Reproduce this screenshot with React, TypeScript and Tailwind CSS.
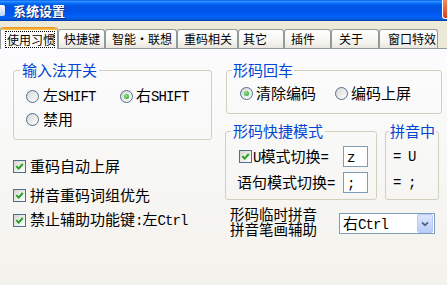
import type { ReactNode } from "react";

const tabs = [
  { name: "快捷键", w: "w-[47px]", pl: "pl-[5px]" },
  { name: "智能•联想", w: "w-[72px]", pl: "pl-[6px]" },
  { name: "重码相关", w: "w-[61px]", pl: "pl-[6px]" },
  { name: "其它", w: "w-[46px]", pl: "pl-[4px]" },
  { name: "插件", w: "w-[47px]", pl: "pl-[6px]" },
  { name: "关于", w: "w-[48px]", pl: "pl-[7px]" },
  { name: "窗口特效", w: "w-[59px]", pl: "pl-[8px]" },
];

function Lat({ children }: { children: ReactNode }) {
  return (
    <span className="font-['Liberation_Mono',monospace] text-[14px] tracking-[-0.9px]">
      {children}
    </span>
  );
}

function Radio({ checked }: { checked?: boolean }) {
  return (
    <span className="flex h-[13px] w-[13px] shrink-0 items-center justify-center rounded-full border border-[#4e6e8e] bg-[linear-gradient(135deg,#d6d6d0,#ffffff)]">
      {checked && (
        <span className="h-[5px] w-[5px] rounded-full bg-[radial-gradient(circle_at_40%_40%,#8ee68e,#1e9a1e)]" />
      )}
    </span>
  );
}

function Check() {
  return (
    <span className="flex h-[13px] w-[13px] shrink-0 items-center justify-center border border-[#4e6e8e] bg-[linear-gradient(135deg,#d6d6d0,#ffffff)]">
      <svg width="9" height="9" viewBox="0 0 9 9">
        <path d="M1.3 4.2 L3.6 6.6 L7.8 2" stroke="#21a121" strokeWidth="1.9" fill="none" />
      </svg>
    </span>
  );
}

function Legend({ children, cls }: { children: ReactNode; cls: string }) {
  return (
    <legend className={`${cls} whitespace-nowrap text-[15px] leading-[16px] text-[#0046d5]`}>
      {children}
    </legend>
  );
}

export default function App() {
  return (
    <div className="h-[285px] w-[447px] overflow-hidden bg-[#ece9d8] font-['Noto_Sans_CJK_SC',sans-serif] text-black">
      {/* title bar */}
      <div className="flex h-[21px] items-center bg-[linear-gradient(180deg,#0058ee_0%,#3593ff_6%,#127dff_12%,#0262ee_20%,#0054e3_30%,#0055eb_60%,#005bf5_72%,#0262f0_86%,#0050d2_94%,#003da8_100%)]">
        <div className="h-[11px] w-[5px] rounded-r-[2px] bg-[linear-gradient(180deg,#ffffff,#b9cff5)]" />
        <span className="ml-[8px] text-[13px] font-bold leading-[21px] text-white [text-shadow:1px_1px_0_#0a2a7a]">
          系统设置
        </span>
        <div className="ml-auto h-[19px] w-[5px] self-start rounded-bl-[3px] border-b border-l border-white bg-[linear-gradient(180deg,#f08a5d,#d6421c)]" />
      </div>

      {/* tabs */}
      <div className="flex h-[27px] items-end">
        <div className="relative z-10 -mb-px h-[22px] w-[58px] rounded-t-[3px] border-x border-[#919b9c] bg-[#fcfcfe]">
          <div className="h-[3px] rounded-t-[3px] bg-[linear-gradient(180deg,#e68b2c,#ffc83c)]" />
          <div className="ml-[4px] mt-[1px] w-[50px] whitespace-nowrap border border-dotted border-black pl-[1px] text-[12px] leading-[15px]">
            使用习惯
          </div>
        </div>
        {tabs.map((t) => (
          <div
            key={t.name}
            className={`${t.w} ${t.pl} h-[19px] whitespace-nowrap rounded-t-[3px] border-x border-t border-[#919b9c] bg-[linear-gradient(180deg,#ffffff,#f4f3ee_70%,#e8e6dd)] text-[12px] leading-[18px]`}
          >
            {t.name}
          </div>
        ))}
      </div>

      {/* panel */}
      <div className="flex h-[237px] border-t border-[#919b9c] bg-[linear-gradient(180deg,#fcfcfe,#f3f2ec)] text-[15px] leading-[18px]">
        {/* left column */}
        <div className="ml-[13px] w-[199px] pt-[13px]">
          <fieldset className="rounded-[3px] border border-[#d0d0bf] pb-[11px] pt-[9px]">
            <Legend cls="ml-[6px] px-[2px]">输入法开关</Legend>
            <div className="pl-[12px]">
              <div className="flex h-[18px] items-center">
                <div className="flex w-[94px] items-center gap-[4px]">
                  <Radio />
                  <span>
                    左<Lat>SHIFT</Lat>
                  </span>
                </div>
                <div className="flex items-center gap-[3px]">
                  <Radio checked />
                  <span>
                    右<Lat>SHIFT</Lat>
                  </span>
                </div>
              </div>
              <div className="mt-[5px] flex h-[18px] items-center gap-[4px]">
                <Radio />
                <span>禁用</span>
              </div>
            </div>
          </fieldset>

          <div className="mt-[17px] flex h-[18px] items-center gap-[4px]">
            <Check />
            <span>重码自动上屏</span>
          </div>
          <div className="mt-[11px] flex h-[18px] items-center gap-[4px]">
            <Check />
            <span>拼音重码词组优先</span>
          </div>
          <div className="mt-[7px] flex h-[18px] items-center gap-[4px]">
            <Check />
            <span>
              禁止辅助功能键<Lat>:</Lat>左<Lat>Ctrl</Lat>
            </span>
          </div>
        </div>

        {/* right column */}
        <div className="ml-[13px] w-[222px] pt-[13px]">
          <fieldset className="ml-[1px] w-[216px] rounded-[3px] border border-[#d0d0bf] pb-[11px] pt-[6px]">
            <Legend cls="ml-[5px] px-[1px]">形码回车</Legend>
            <div className="flex h-[18px] items-center pl-[13px]">
              <div className="flex w-[95px] items-center gap-[3px]">
                <Radio checked />
                <span>清除编码</span>
              </div>
              <div className="flex items-center gap-[3px]">
                <Radio />
                <span>编码上屏</span>
              </div>
            </div>
          </fieldset>

          <div className="mt-[9px] flex">
            <fieldset className="w-[152px] rounded-[3px] border border-[#d0d0bf] pb-[6px] pt-[7px]">
              <Legend cls="ml-[5px] px-[2px]">形码快捷模式</Legend>
              <div className="pr-[8px]">
                <div className="flex h-[21px] items-center pl-[13px]">
                  <Check />
                  <span className="ml-[1px]">
                    <Lat>U</Lat>模式切换<Lat>=</Lat>
                  </span>
                  <div className="ml-auto h-[21px] w-[25px] border border-[#7f9db9] bg-white pl-[3px] leading-[18px]">
                    <Lat>z</Lat>
                  </div>
                </div>
                <div className="mt-[5px] flex h-[21px] items-center pl-[11px]">
                  <span>
                    语句模式切换<Lat>=</Lat>
                  </span>
                  <div className="ml-auto h-[21px] w-[25px] border border-[#7f9db9] bg-white pl-[3px] leading-[18px]">
                    <Lat>;</Lat>
                  </div>
                </div>
              </div>
            </fieldset>

            <fieldset className="ml-[8px] w-[54px] rounded-[3px] border border-[#d0d0bf] pb-[6px] pt-[7px]">
              <Legend cls="ml-[3px] px-[1px]">拼音中</Legend>
              <div className="pl-[7px]">
                <div className="flex h-[21px] items-center">
                  <Lat>= U</Lat>
                </div>
                <div className="mt-[5px] flex h-[21px] items-center">
                  <Lat>= ;</Lat>
                </div>
              </div>
            </fieldset>
          </div>

          <div className="mt-[6px] flex items-start">
            <div className="ml-[5px] w-[109px] text-[14.5px] leading-[15px]">
              <div>形码临时拼音</div>
              <div>拼音笔画辅助</div>
            </div>
            <div className="mt-[7px] flex h-[21px] w-[96px] items-center border border-[#7f9db9] bg-white">
              <span className="pl-[3px]">
                右<Lat>Ctrl</Lat>
              </span>
              <div className="ml-auto mr-[1px] flex h-[19px] w-[16px] items-center justify-center rounded-[2px] border border-[#b5c8f6] bg-[linear-gradient(180deg,#dbe5fd,#b9cdfa)]">
                <svg width="8" height="6" viewBox="0 0 8 6">
                  <path d="M1 1.3 L4 4.3 L7 1.3" stroke="#4d6185" strokeWidth="1.8" fill="none" />
                </svg>
              </div>
            </div>
          </div>
        </div>
      </div>
    </div>
  );
}
